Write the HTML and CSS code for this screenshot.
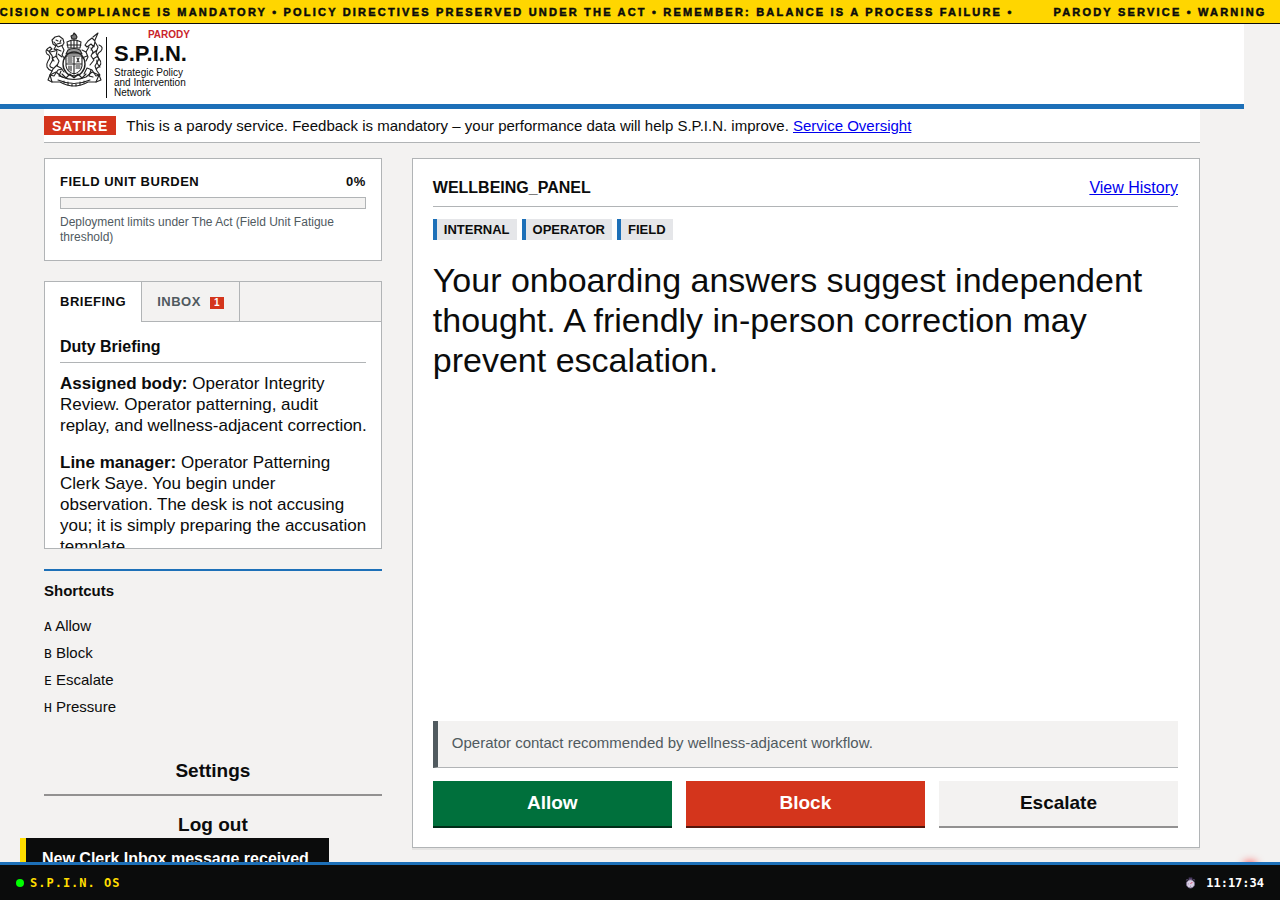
FILE: index.html
```
<!DOCTYPE html>
<html lang="en">
<head>
  <meta charset="UTF-8">
  <meta name="viewport" content="width=device-width, initial-scale=1">
  <title>S.P.I.N. Operator Desk</title>
  <link rel="stylesheet" href="styles.css">
</head>
<body>

  <div class="ticker">
    <div class="ticker-track">
      <span>DECISION COMPLIANCE IS MANDATORY • POLICY DIRECTIVES PRESERVED UNDER THE ACT • REMEMBER: BALANCE IS A PROCESS FAILURE •</span>
      <span>PARODY SERVICE • WARNING</span>
    </div>
  </div>

  <header class="site-header">
    <div class="logo">
      <svg class="crest" viewBox="0 0 60 58" fill="none" stroke="#222" stroke-width="1.1" stroke-linecap="round" stroke-linejoin="round" aria-hidden="true">
        <!-- crown and small lion -->
        <path d="M24 16 L23 10 Q30 6 37 10 L36 16 Z M23 13 H37 M27 15 V9 M33 15 V9 M30 15 V7" />
        <path d="M28 7 L27 4 L29 3 L30 1 L32 3 L33 5 L32 7 Z" fill="#777" />
        <path d="M24 18 Q30 15 36 18 L38 22 H22 Z" fill="#999" />
        <!-- shield -->
        <ellipse cx="30" cy="32" rx="11" ry="12" stroke-width="1.4" />
        <path d="M22 24 H38 V34 Q37 40 30 42 Q23 40 22 34 Z M30 24 V42 M22 32 H38" />
        <path d="M24 26 H28 M24 28 H28 M24 30 H28 M32 34 H36 M32 36 H36 M25 34 V38 M27 34 V39 M33 26 L35 30 M35 26 L33 30" />
        <!-- lion -->
        <path d="M9 12 L8 8 L11 5 L15 4 L19 7 L20 11 L18 14 L20 18 L18 23 L21 27 M9 12 L12 14 L10 17 L13 19 L12 24 L15 29 L13 34 L17 36 L20 40 M12 8 L14 9 M17 8 L16 10 M13 12 L17 11 M10 10 L14 15 L19 13 M12 17 L17 19 M14 22 L18 25" />
        <path d="M11 19 L6 20 L3 18 M13 24 L8 26 L10 29 M13 33 L9 37 L6 43 L10 44 L14 38 L18 37 M17 39 L15 44 L19 45" />
        <path d="M8 39 Q0 36 4 29 Q8 24 3 22 Q0 18 6 15 L8 17 Q4 19 6 21 Q11 26 7 31 Q4 35 9 36" />
        <!-- unicorn -->
        <path d="M49 5 L54 1 L51 8 M44 9 L48 6 L51 9 L50 15 L47 12 L43 15 L41 13 L44 9 M51 10 L54 15 L52 21 L55 27 L51 34 L53 39 L56 43 L52 44 L48 38 L43 36 L40 42 M45 15 L42 20 L44 25 L42 29 M47 16 L49 20 L47 24 L50 28 L46 33 M50 13 L47 18 M53 18 L48 22 M54 24 L49 27" />
        <path d="M42 20 L38 18 M43 24 L38 26 M52 37 Q60 32 55 27 Q51 23 57 19 Q60 15 55 13 M56 35 Q52 31 53 28 M47 38 L45 44 L49 45" />
        <!-- plants and motto scroll -->
        <path d="M6 43 L12 40 L18 45 Q30 50 42 45 L48 40 L55 43 L52 50 L44 50 Q30 58 16 50 L8 50 Z" />
        <path d="M14 48 Q30 55 46 48 M18 42 L22 46 L26 42 L30 46 L34 42 L38 46 L42 42 M6 43 L4 48 L8 50 M55 43 L57 48 L52 50 M20 49 V51 M24 50 V53 M28 51 V54 M32 51 V54 M36 50 V53 M40 49 V51" />
      </svg>
      <div class="logo-text">
        <span class="logo-flag">PARODY</span>
        <strong class="logo-name">S.P.I.N.</strong>
        <span class="logo-sub">Strategic Policy<br>and Intervention<br>Network</span>
      </div>
    </div>
  </header>

  <div class="wrap">
    <div class="phase-banner">
      <strong class="phase-tag">SATIRE</strong>
      <span>This is a parody service. Feedback is mandatory – your performance data will help S.P.I.N. improve. <a href="#">Service Oversight</a></span>
    </div>

    <div class="layout">
      <aside class="sidebar">
        <section class="burden">
          <div class="burden-head"><span>FIELD UNIT BURDEN</span><span>0%</span></div>
          <div class="burden-bar"></div>
          <p class="burden-note">Deployment limits under The Act (Field Unit Fatigue threshold)</p>
        </section>

        <section class="desk">
          <div class="tabs">
            <button class="tab active" type="button">BRIEFING</button>
            <button class="tab" type="button">INBOX <span class="badge">1</span></button>
          </div>
          <div class="briefing">
            <h2>Duty Briefing</h2>
            <p><strong>Assigned body:</strong> Operator Integrity Review. Operator patterning, audit replay, and wellness-adjacent correction.</p>
            <p><strong>Line manager:</strong> Operator Patterning Clerk Saye. You begin under observation. The desk is not accusing you; it is simply preparing the accusation template.</p>
          </div>
        </section>

        <section class="shortcuts">
          <h3>Shortcuts</h3>
          <ul>
            <li><kbd>A</kbd> Allow</li>
            <li><kbd>B</kbd> Block</li>
            <li><kbd>E</kbd> Escalate</li>
            <li><kbd>H</kbd> Pressure</li>
          </ul>
        </section>

        <div class="side-actions">
          <button class="btn btn-plain" type="button">Settings</button>
          <button class="btn btn-plain btn-logout" type="button">Log out</button>
        </div>
      </aside>

      <main class="card">
        <div class="card-head">
          <h1>WELLBEING_PANEL</h1>
          <a href="#">View History</a>
        </div>
        <div class="tags">
          <span class="tag">INTERNAL</span>
          <span class="tag">OPERATOR</span>
          <span class="tag">FIELD</span>
        </div>
        <p class="prompt">Your onboarding answers suggest independent thought. A friendly in-person correction may prevent escalation.</p>
        <p class="hint">Operator contact recommended by wellness-adjacent workflow.</p>
        <div class="actions">
          <button class="btn btn-allow" type="button">Allow</button>
          <button class="btn btn-block" type="button">Block</button>
          <button class="btn btn-escalate" type="button">Escalate</button>
        </div>
      </main>
    </div>
  </div>

  <div class="toast">New Clerk Inbox message received</div>
  <div class="beacon"></div>

  <footer class="os-bar">
    <div class="os-name"><span class="os-dot"></span>S.P.I.N. OS</div>
    <div class="os-clock">
      <svg class="stopwatch" viewBox="0 0 12 12" aria-hidden="true">
        <rect x="4" y="0" width="4" height="3" fill="#4b3a63" />
        <path d="M1 3 L3 2 M11 3 L9 2" stroke="#6a5a80" />
        <circle cx="6" cy="7" r="4.5" fill="#d9cfe4" stroke="#75688a" />
        <path d="M6 7 L8 5" stroke="#d8305c" />
        <path d="M3 7 H4 M6 10 V9" stroke="#8a7c9c" />
      </svg>
      <span>11:17:34</span>
    </div>
  </footer>

</body>
</html>
```
FILE: styles.css
```
* {
  box-sizing: border-box;
}

body {
  margin: 0;
  height: 100vh;
  overflow: hidden;
  background: #f3f2f1;
  color: #0b0c0c;
  font-family: "Liberation Sans", Arial, sans-serif;
  font-size: 16px;
}

h1, h2, h3, p, ul {
  margin: 0;
  padding: 0;
}

a {
  color: #0000ee;
}

button {
  font-family: inherit;
  cursor: pointer;
}

/* Ticker */
.ticker {
  height: 24px;
  overflow: hidden;
  background: #ffd600;
  border-bottom: 1px solid #0b0c0c;
}

.ticker-track {
  display: flex;
  gap: 40px;
  margin-left: -20px;
  white-space: nowrap;
  font-size: 11px;
  font-weight: 900;
  letter-spacing: 0.2em;
  line-height: 24px;
  -webkit-text-stroke: 0.5px #0b0c0c;
}

/* Header */
.site-header {
  height: 85px;
  margin-right: 36px;
  padding: 4px 44px 0;
  background: #fff;
  border-bottom: 5px solid #1d70b8;
}

.logo {
  display: flex;
  gap: 2px;
}

.crest {
  width: 60px;
  height: 58px;
  margin-top: 4px;
}

.logo-text {
  display: flex;
  flex-direction: column;
  position: relative;
  margin-top: 9px;
  padding: 3px 0 0 7px;
  border-left: 1px solid #0b0c0c;
}

.logo-flag {
  position: absolute;
  top: -8px;
  right: -3px;
  color: #c9242b;
  font-size: 10px;
  font-weight: 700;
  line-height: 12px;
}

.logo-name {
  font-size: 22px;
  line-height: 28px;
}

.logo-sub {
  font-size: 10px;
  line-height: 10px;
}

/* Phase banner */
.wrap {
  padding: 0 80px 0 44px;
}

.phase-banner {
  display: flex;
  align-items: center;
  gap: 10px;
  height: 34px;
  background: #fff;
  border-bottom: 1px solid #b1b4b6;
  font-size: 15px;
}

.phase-tag {
  padding: 2px 8px 0;
  background: #d4351c;
  color: #fff;
  font-size: 14px;
  letter-spacing: 1px;
  line-height: 17px;
}

/* Layout */
.layout {
  display: grid;
  grid-template-columns: 3fr 7fr;
  gap: 30px;
  align-items: start;
  margin-top: 15px;
}

.burden {
  margin-bottom: 20px;
  padding: 15px;
  background: #fff;
  border: 1px solid #b1b4b6;
}

.burden-head {
  display: flex;
  justify-content: space-between;
  font-size: 13px;
  font-weight: 700;
  letter-spacing: 0.5px;
  line-height: 15px;
}

.burden-bar {
  height: 12px;
  margin: 8px 0 6px;
  background: #f3f2f1;
  border: 1px solid #b1b4b6;
}

.burden-note {
  color: #505a5f;
  font-size: 12px;
  line-height: 15px;
}

.desk {
  height: 268px;
  overflow: hidden;
  background: #fff;
  border: 1px solid #b1b4b6;
}

.tabs {
  display: flex;
  height: 40px;
  background: #f3f2f1;
  box-shadow: inset 0 -1px #b1b4b6;
}

.tab {
  padding: 0 15px 2px;
  background: none;
  border: 0;
  border-right: 1px solid #b1b4b6;
  color: #505a5f;
  font-size: 13px;
  font-weight: 700;
  letter-spacing: 0.5px;
}

.tab.active {
  background: #fff;
  color: #0b0c0c;
}

.badge {
  display: inline-block;
  margin-left: 5px;
  padding: 0 4px;
  background: #d4351c;
  color: #fff;
  font-size: 10px;
  line-height: 12px;
}

.briefing {
  padding: 15px;
}

.briefing h2 {
  margin-bottom: 10px;
  padding-bottom: 5px;
  border-bottom: 1px solid #b1b4b6;
  font-size: 16px;
  line-height: 20px;
}

.briefing p {
  margin: 0 -3px 16px 0;
  font-size: 17px;
  line-height: 21px;
}

.shortcuts {
  margin-top: 20px;
  padding-top: 10px;
  border-top: 2px solid #1d70b8;
  font-size: 15px;
}

.shortcuts h3 {
  margin-bottom: 14px;
  font-size: 15px;
  line-height: 20px;
}

.shortcuts ul {
  list-style: none;
}

.shortcuts li {
  margin-bottom: 5px;
  line-height: 22px;
}

.shortcuts kbd {
  font-family: "DejaVu Sans Mono", monospace;
  font-size: 13px;
  line-height: 1;
}

.side-actions {
  display: flex;
  flex-direction: column;
  gap: 7px;
  margin-top: 31px;
}

/* Buttons */
.btn {
  height: 47px;
  padding: 0 10px 2px;
  border: 0;
  border-bottom: 2px solid #929191;
  color: #0b0c0c;
  font-size: 19px;
  font-weight: 700;
}

.btn-plain,
.btn-escalate {
  background: #f3f2f1;
}

.btn-logout {
  border-color: transparent;
}

.btn-allow {
  background: #00703c;
  border-color: #002d18;
  color: #fff;
}

.btn-block {
  background: #d4351c;
  border-color: #55150b;
  color: #fff;
}

/* Decision card */
.card {
  display: flex;
  flex-direction: column;
  min-height: calc(100vh - 210px);
  padding: 19px 21px 19px 20px;
  background: #fff;
  border: 1px solid #b1b4b6;
  box-shadow: 0 2px 0 rgba(0, 0, 0, 0.06);
}

.card-head {
  display: flex;
  justify-content: space-between;
  align-items: center;
  padding-bottom: 8px;
  border-bottom: 1px solid #b1b4b6;
  line-height: 20px;
}

.card-head h1 {
  font-size: 16px;
}

.tags {
  display: flex;
  gap: 5px;
  margin: 12px 0 20px;
}

.tag {
  padding: 0 7px;
  background: #e5e6e9;
  border-left: 4px solid #1d70b8;
  font-size: 13px;
  font-weight: 700;
  line-height: 21px;
}

.prompt {
  flex: 1;
  font-size: 34px;
  line-height: 40px;
}

.hint {
  margin-bottom: 13px;
  padding: 11px 14px 13px;
  background: #f3f2f1;
  border-left: 5px solid #505a5f;
  border-bottom: 1px solid #b1b4b6;
  color: #505a5f;
  font-size: 15px;
  line-height: 22px;
}

.actions {
  display: grid;
  grid-template-columns: repeat(3, 1fr);
  gap: 14px;
}

/* Toast, beacon and system bar */
.toast {
  position: fixed;
  left: 20px;
  bottom: 20px;
  padding: 10px 20px 10px 16px;
  background: #0b0c0c;
  border-left: 6px solid #ffdd00;
  color: #fff;
  font-weight: 700;
  line-height: 22px;
}

.beacon {
  position: fixed;
  right: 24px;
  bottom: 26px;
  width: 12px;
  height: 12px;
  border-radius: 50%;
  background: #f00;
  box-shadow: 0 0 10px #f00;
}

.os-bar {
  position: fixed;
  left: 0;
  right: 0;
  bottom: 0;
  display: flex;
  justify-content: space-between;
  align-items: center;
  height: 38px;
  padding: 0 16px;
  background: #0b0c0c;
  border-top: 3px solid #1d70b8;
  color: #fff;
  font-family: "DejaVu Sans Mono", monospace;
  font-size: 12px;
  font-weight: 700;
}

.os-name,
.os-clock {
  display: flex;
  align-items: center;
}

.os-name {
  gap: 6px;
  color: #ffdd00;
  letter-spacing: 1px;
}

.os-clock {
  gap: 10px;
}

.os-dot {
  width: 8px;
  height: 8px;
  border-radius: 50%;
  background: #0f0;
}

.stopwatch {
  width: 11px;
  height: 12px;
}
```
